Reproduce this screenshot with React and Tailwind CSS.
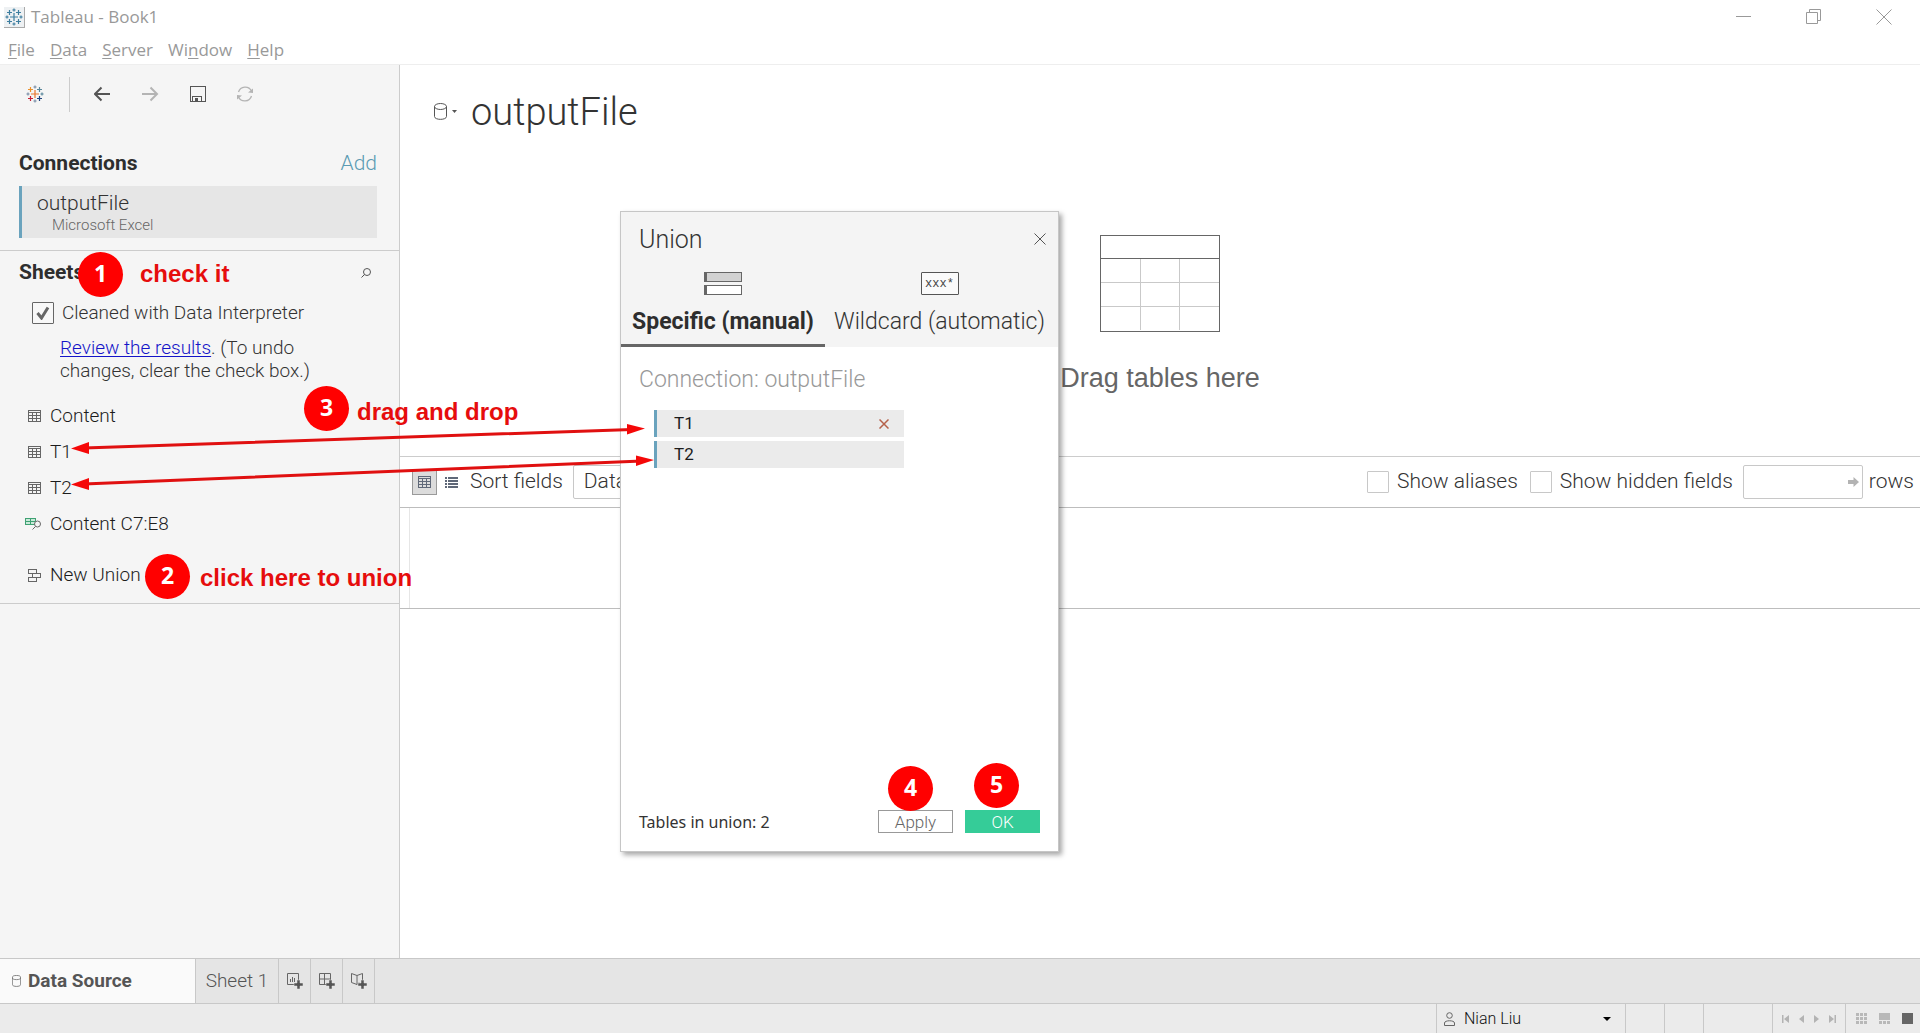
import React from "react";

const ui = "font-[Roboto,sans-serif] font-light";

function TableauMark({ size, colors }) {
  const marks = [
    [9, 9, 4, colors[0]],
    [4.5, 4.5, 2.5, colors[1]],
    [13.5, 4.5, 2.5, colors[2]],
    [4.5, 13.5, 2.5, colors[3]],
    [13.5, 13.5, 2.5, colors[4]],
    [9, 2, 1.6, colors[5]],
    [9, 16, 1.6, colors[5]],
    [2, 9, 1.6, colors[5]],
    [16, 9, 1.6, colors[2]],
  ];
  return (
    <svg width={size} height={size} viewBox="0 0 18 18" fill="none" strokeWidth="1.2" aria-hidden="true">
      {marks.map(([x, y, r, c]) => (
        <path key={`${x}-${y}`} stroke={c} d={`M${x - r} ${y}H${x + r}M${x} ${y - r}V${y + r}`} />
      ))}
    </svg>
  );
}

function TableIcon({ color = "#666" }) {
  return (
    <svg width="13" height="12" viewBox="0 0 13 12" fill="none" stroke={color} shapeRendering="crispEdges" aria-hidden="true">
      <rect x="0.5" y="0.5" width="12" height="11" />
      <path d="M0 2.5H13M0 5.5H13M0 8.5H13M4.5 2V12M8.5 2V12" />
    </svg>
  );
}

function Cylinder({ w, h }) {
  return (
    <svg width={w} height={h} viewBox="0 0 13 17" fill="none" stroke="#555" strokeWidth="1" aria-hidden="true">
      <ellipse cx="6.5" cy="3.5" rx="6" ry="3" />
      <path d="M0.5 3.5V13.5C0.5 17.3 12.5 17.3 12.5 13.5V3.5" />
    </svg>
  );
}

function Toolbar() {
  return (
    <div className="flex h-[58px] items-center pl-6">
      <button aria-label="Start page" className="flex w-[21px] justify-center">
        <TableauMark size={18} colors={["#e8762c", "#eb912b", "#59879b", "#c72035", "#1f447e", "#7b8fa8"]} />
      </button>
      <div className="ml-6 h-[35px] w-px bg-[#cccccc]" />
      <button aria-label="Back" className="ml-6">
        <svg width="17" height="16" viewBox="0 0 17 16" fill="none" stroke="#555" strokeWidth="2">
          <path d="M16 8H1M7.500 1.500L1 8L7.500 14.500" />
        </svg>
      </button>
      <button aria-label="Forward" className="ml-[31px]">
        <svg width="17" height="16" viewBox="0 0 17 16" fill="none" stroke="#b4b4b4" strokeWidth="2">
          <path d="M0 8H15M8.5 1.5L15 8L8.5 14.5" />
        </svg>
      </button>
      <button aria-label="Save" className="ml-[31px]">
        <svg width="16" height="16" viewBox="0 0 16 16" fill="none" stroke="#555" shapeRendering="crispEdges">
          <rect x="0.5" y="0.5" width="15" height="15" />
          <path d="M2.5 15.500V10.500H11.500V15.500" />
          <path d="M5 12H7V15H5Z" fill="#555" />
        </svg>
      </button>
      <button aria-label="Refresh" className="ml-[30px]">
        <svg width="18" height="16" viewBox="0 0 18 16" fill="none" stroke="#b4b4b4" strokeWidth="1.3">
          <path d="M2.500 6A7 7 0 0 1 15.500 5M15.500 10A7 7 0 0 1 2.500 11" />
          <path d="M12 6.500L17 7L17 2.500ZM6 9.500L1 9L1 13.500Z" fill="#b4b4b4" stroke="none" />
        </svg>
      </button>
    </div>
  );
}

function SheetRow({ icon, label }) {
  return (
    <li>
      <button className="flex h-9 w-full items-center text-[19px] text-[#1c1c1c]">
        <span className="flex w-[50px] justify-end pr-[9px]">{icon}</span>
        {label}
      </button>
    </li>
  );
}

function Sidebar() {
  return (
    <aside className="flex w-[400px] shrink-0 flex-col border-r border-[#cccccc] bg-[#f5f5f5] text-[#333]">
      <Toolbar />
      <section className="mt-5 border-b border-[#cccccc] pr-[22px] pb-3 pl-[19px]">
        <div className="flex h-[43px] items-center justify-between pb-[2px]">
          <h2 className="text-[21px] font-bold text-[#2e2e2e]">Connections</h2>
          <button className="text-[21px] text-[#5b9bb3]">Add</button>
        </div>
        <button className="flex h-[52px] w-full flex-col justify-center border-l-[3px] border-[#6aa3bd] bg-[#e6e6e6] pt-[2px] pl-[15px] text-left">
          <span className="text-[21px] leading-6">outputFile</span>
          <span className="pl-[15px] text-[15px] leading-5 text-[#666]">Microsoft Excel</span>
        </button>
      </section>
      <section className="border-b border-[#cccccc] pb-[10px]">
        <div className="flex h-11 items-center justify-between pr-7 pl-[19px]">
          <h2 className="text-[21px] font-bold text-[#2e2e2e]">Sheets</h2>
          <button aria-label="Search sheets">
            <svg width="10" height="10" viewBox="0 0 10 10" fill="none" stroke="#555">
              <circle cx="6" cy="4" r="3.500" />
              <path d="M3.500 6.500L0.500 9.500" />
            </svg>
          </button>
        </div>
        <label className="flex h-9 items-center gap-2 pl-8 text-[19px]">
          <span className="relative flex size-[22px]">
            <input type="checkbox" defaultChecked className="size-[22px] appearance-none rounded-[1px] border border-[#666] bg-[#f8f8f8]" />
            <svg className="pointer-events-none absolute top-1 left-1" width="14" height="14" viewBox="0 0 14 14" fill="none" stroke="#666" strokeWidth="3">
              <path d="M1.500 7L5.500 12L12 1.500" />
            </svg>
          </span>
          Cleaned with Data Interpreter
        </label>
        <p className="pt-[5px] pl-[60px] text-[19px] leading-[23px]">
          <a href="#results" className="text-[#1414c8] underline decoration-1 underline-offset-2">Review the results</a>. (To undo
          <br />
          changes, clear the check box.)
        </p>
        <ul className="mt-4">
          <SheetRow icon={<TableIcon />} label="Content" />
          <SheetRow icon={<TableIcon />} label="T1" />
          <SheetRow icon={<TableIcon />} label="T2" />
          <SheetRow
            label="Content C7:E8"
            icon={
              <svg width="16" height="12" viewBox="0 0 16 12" fill="none">
                <rect x="0.5" y="0.5" width="10" height="6" fill="#c9ead9" stroke="#3fa173" />
                <path d="M0 3.500H10M5.500 0V6.500" stroke="#3fa173" />
                <circle cx="12.500" cy="6" r="3" fill="#f5f5f5" stroke="#666" />
                <path d="M10.500 8.500L7.500 11.500" stroke="#666" />
              </svg>
            }
          />
        </ul>
        <button className="mt-[15px] flex h-9 items-center text-[19px] text-[#1c1c1c]">
          <span className="flex w-[50px] justify-end pr-[9px]">
            <svg width="13" height="13" viewBox="0 0 13 13" fill="none" stroke="#666" shapeRendering="crispEdges">
              <rect x="0.500" y="0.500" width="8" height="4" />
              <rect x="4.500" y="4.500" width="8" height="4" />
              <rect x="0.500" y="8.500" width="8" height="4" />
            </svg>
          </span>
          New Union
        </button>
      </section>
    </aside>
  );
}

function GridToolbar() {
  return (
    <div className="flex h-[51px] items-center justify-between border-b border-[#bdbdbd] pr-[6px] pl-3 text-[21px]">
      <div className="flex items-center">
        <button aria-label="Grid view" className="flex size-[25px] items-center justify-center border border-[#9a9a9a] bg-[#dcdcdc]">
          <TableIcon color="#5f6878" />
        </button>
        <button aria-label="List view" className="ml-2">
          <svg width="13" height="11" viewBox="0 0 13 11" fill="#5f6878" shapeRendering="crispEdges">
            <path d="M0 0H2V2H0ZM3 0H13V2H3ZM0 3H2V5H0ZM3 3H13V5H3ZM0 6H2V8H0ZM3 6H13V8H3ZM0 9H2V11H0ZM3 9H13V11H3Z" />
          </svg>
        </button>
        <label htmlFor="sort" className="ml-3">Sort fields</label>
        <select id="sort" className="ml-[10px] h-[34px] w-[220px] appearance-none rounded-[2px] border border-[#c8c8c8] bg-white pl-[10px]">
          <option>Data source order</option>
        </select>
      </div>
      <div className="flex items-center">
        <label className="flex items-center gap-2">
          <input type="checkbox" className="size-[22px] appearance-none rounded-[1px] border border-[#c8c8c8]" />
          Show aliases
        </label>
        <label className="ml-3 flex items-center gap-2">
          <input type="checkbox" className="size-[22px] appearance-none rounded-[1px] border border-[#c8c8c8]" />
          Show hidden fields
        </label>
        <label className="ml-[10px] flex items-center gap-[6px]">
          <span className="relative flex">
            <input type="text" className="h-[34px] w-[120px] rounded-[2px] border border-[#c8c8c8]" />
            <svg className="absolute top-3 right-1" width="11" height="10" viewBox="0 0 11 10" fill="#b3b3b3">
              <path d="M0 3H5.500V0L11 5L5.500 10V7H0Z" />
            </svg>
          </span>
          rows
        </label>
      </div>
    </div>
  );
}

function Canvas() {
  return (
    <main className="flex min-w-0 flex-1 flex-col bg-white text-[#333]">
      <div className="flex h-[392px] shrink-0 flex-col border-b border-[#cccccc]">
        <header className="flex h-[92px] items-center pl-[34px]">
          <button aria-label="Data source options" className="flex items-center gap-[5px]">
            <Cylinder w={13} h={17} />
            <svg width="5" height="3" viewBox="0 0 5 3" fill="#555"><path d="M0 0H5L2.500 3Z" /></svg>
          </button>
          <h1 className="ml-[14px] pt-[2px] text-[38px] leading-10">outputFile</h1>
        </header>
        <div className="flex flex-col items-center pt-[78px] font-normal">
          <svg width="120" height="97" viewBox="0 0 120 97" fill="none" stroke="#c9c9c9" shapeRendering="crispEdges">
            <path d="M40 24V95M79 24V95M1 47.500H119M1 71.500H119" />
            <path d="M0.500 0.500H119.500V96.500H0.500Z" stroke="#666" />
            <path d="M1 23.500H119" stroke="#666" />
          </svg>
          <p className="mt-7 font-['Liberation_Sans',sans-serif] text-[27px] leading-9 text-[#666]">Drag tables here</p>
        </div>
      </div>
      <GridToolbar />
      <div className="flex h-[101px] border-b border-[#bdbdbd]">
        <div className="w-[10px] border-r border-[#e6e6e6]" />
      </div>
    </main>
  );
}

function Badge({ n, className }) {
  return (
    <span className={`absolute flex size-[45px] items-center justify-center rounded-full bg-[#ff0000] pb-[2px] font-['Open_Sans',sans-serif] text-[23px] font-bold text-white ${className}`}>
      {n}
    </span>
  );
}

function UnionDialog() {
  return (
    <div role="dialog" aria-labelledby="union-title" className="absolute top-[211px] left-[620px] flex h-[641px] w-[439px] flex-col border border-[#c6c6c6] bg-white text-[#333] shadow-[3px_3px_5px_rgba(0,0,0,0.35)]">
      <div className="bg-[#f4f4f4]">
        <div className="flex h-[54px] items-center justify-between pr-3 pl-[18px]">
          <h2 id="union-title" className="pt-[2px] text-[25px]">Union</h2>
          <button aria-label="Close">
            <svg width="12" height="12" viewBox="0 0 12 12" stroke="#555"><path d="M0.500 0.500L11.500 11.500M11.500 0.500L0.500 11.500" /></svg>
          </button>
        </div>
        <div className="flex h-[81px] text-[23px]" role="tablist">
          <button role="tab" aria-selected="true" className="flex w-[204px] flex-col items-center border-b-[3px] border-[#666] pt-[6px] font-bold text-[#2e2e2e]">
            <svg width="38" height="23" viewBox="0 0 38 23" fill="none" stroke="#666" shapeRendering="crispEdges">
              <rect x="0.500" y="0.500" width="37" height="9" fill="#d2d2d2" />
              <rect x="0.500" y="13.500" width="37" height="9" fill="#fff" />
              <path d="M0 0H3V10H0ZM0 13H3V23H0Z" fill="#666" stroke="none" />
            </svg>
            <span className="mt-[11px] leading-8">Specific (manual)</span>
          </button>
          <button role="tab" aria-selected="false" className="flex flex-1 flex-col items-center pt-[6px] pr-1 whitespace-nowrap">
            <span className="flex h-[23px] w-[38px] items-center justify-center rounded-[1px] border border-[#555] bg-[#fafafa] font-['Liberation_Mono',monospace] text-[12px] leading-none font-normal text-[#444]">xxx*</span>
            <span className="mt-[11px] leading-8">Wildcard (automatic)</span>
          </button>
        </div>
      </div>
      <p className="mt-[17px] pl-[18px] text-[23px] leading-8 text-[#999]">Connection: outputFile</p>
      <ul className="mt-[14px] ml-[33px] flex w-[250px] flex-col gap-1 text-[17px] leading-none font-normal text-[#1c1c1c]">
        <li className="flex h-[27px] items-center justify-between border-l-[3px] border-[#6aa3bd] bg-[#ebebeb] pr-[15px] pl-[17px]">
          T1
          <button aria-label="Remove T1">
            <svg width="10" height="10" viewBox="0 0 10 10" stroke="#b5614a" strokeWidth="1.500"><path d="M0.500 0.500L9.500 9.500M9.500 0.500L0.500 9.500" /></svg>
          </button>
        </li>
        <li className="flex h-[27px] items-center border-l-[3px] border-[#6aa3bd] bg-[#ebebeb] pl-[17px]">T2</li>
      </ul>
      <div className="mt-auto mb-[18px] flex items-center pr-[18px] pl-[18px]">
        <span className="flex-1 font-['Noto_Sans',sans-serif] text-[16px] leading-5 font-normal">Tables in union: 2</span>
        <button className="h-[23px] w-[75px] border border-[#999] bg-white text-[17px] leading-5 text-[#666]">Apply</button>
        <button className="ml-3 h-[23px] w-[75px] bg-[#35cc98] text-[17px] leading-5 text-white">OK</button>
      </div>
      <Badge n="4" className="top-[554px] left-[267px]" />
      <Badge n="5" className="top-[551px] left-[353px]" />
    </div>
  );
}

function Callout({ children, className }) {
  return (
    <span className={`absolute font-['Liberation_Sans',sans-serif] text-[24px] leading-7 font-bold whitespace-nowrap text-[#e60d0d] ${className}`}>
      {children}
    </span>
  );
}

function Annotations() {
  return (
    <div className="pointer-events-none absolute inset-0">
      <svg className="absolute inset-0" width="100%" height="100%" fill="#f50808" stroke="#e01010" strokeWidth="3">
        <path d="M84 448L632 429.500M84 484L642 461" />
        <path stroke="none" d="M71 448.500L89 442V454ZM645 428.500L627 424V434.500ZM71 484.500L89 478V490ZM654 460L636 455.500V466Z" />
      </svg>
      <Badge n="1" className="top-[252px] left-[78px]" />
      <Callout className="top-[260px] left-[140px]">check it</Callout>
      <Badge n="3" className="top-[386px] left-[304px]" />
      <Callout className="top-[398px] left-[357px]">drag and drop</Callout>
      <Badge n="2" className="top-[554px] left-[145px]" />
      <Callout className="top-[564px] left-[200px]">click here to union</Callout>
    </div>
  );
}

function PlusMark() {
  return <path d="M10 7H13V10H16V13H13V16H10V13H7V10H10Z" fill="#555" stroke="#e5e5e5" strokeWidth="0.500" />;
}

function SheetTabs() {
  const cell = "flex w-8 items-center justify-center border-r border-[#c8c8c8]";
  return (
    <nav className="flex h-[46px] shrink-0 border-y border-[#c8c8c8] bg-[#e5e5e5] text-[#555]">
      <button className="flex w-[196px] items-center gap-[7px] border-r border-[#c8c8c8] bg-[#fafafa] pl-3 text-[19px] font-bold">
        <Cylinder w={9} h={12} />
        Data Source
      </button>
      <button className="w-[83px] border-r border-[#c8c8c8] text-[19px]">Sheet 1</button>
      <button aria-label="New worksheet" className={cell}>
        <svg width="16" height="16" viewBox="0 0 16 16" fill="none" stroke="#666">
          <path d="M8 11.500H0.500V0.500H11.500V8M3.500 6V9M5.500 4V9M7.500 5V9" />
          <PlusMark />
        </svg>
      </button>
      <button aria-label="New dashboard" className={cell}>
        <svg width="16" height="16" viewBox="0 0 16 16" fill="none" stroke="#666">
          <path d="M8 11.500H0.500V0.500H11.500V8M5.500 0.500V11.500M0.500 6H11.500" />
          <PlusMark />
        </svg>
      </button>
      <button aria-label="New story" className={cell}>
        <svg width="16" height="16" viewBox="0 0 16 16" fill="none" stroke="#666">
          <path d="M8 9.500L6 11.500L0.500 9.500V0.500L6 2.500L11.500 0.500V8M6 2.500V11.500" />
          <PlusMark />
        </svg>
      </button>
    </nav>
  );
}

function StatusBar() {
  const nav = [
    ["First", "M0 0H1.500V8H0ZM7 0V8L2 4Z"],
    ["Previous", "M6 0V8L1 4Z"],
    ["Next", "M1 0V8L6 4Z"],
    ["Last", "M0 0V8L5 4ZM5.500 0H7V8H5.500Z"],
  ];
  return (
    <footer className="flex h-[29px] shrink-0 justify-end bg-[#ebebeb]">
      <button className="flex w-[190px] items-center border-x border-[#c8c8c8] pr-[14px] pl-[7px] text-[16px] text-[#111]">
        <svg width="11" height="14" viewBox="0 0 11 14" fill="none" stroke="#666">
          <circle cx="5.500" cy="3.500" r="2.800" />
          <path d="M0.500 13.500V11C0.500 8 10.500 8 10.500 11V13.500Z" />
        </svg>
        <span className="ml-[9px] flex-1 text-left">Nian Liu</span>
        <svg width="8" height="4" viewBox="0 0 8 4"><path d="M0 0H8L4 4Z" /></svg>
      </button>
      <div className="w-[39px] border-r border-[#c8c8c8]" />
      <div className="w-[39px] border-r border-[#c8c8c8]" />
      <div className="w-[69px] border-r border-[#c8c8c8]" />
      <div className="flex w-[73px] items-center justify-between border-r border-[#c8c8c8] px-[9px]">
        {nav.map(([name, d]) => (
          <button key={name} aria-label={name}>
            <svg width="7" height="8" viewBox="0 0 7 8" fill="#b3b3b3"><path d={d} /></svg>
          </button>
        ))}
      </div>
      <div className="flex w-[74px] items-center justify-between pr-[7px] pl-[10px]">
        <button aria-label="Show sheet sorter">
          <svg width="11" height="11" viewBox="0 0 11 11" fill="#b8b8b8" shapeRendering="crispEdges">
            <path d="M0 0H3V3H0ZM4 0H7V3H4ZM8 0H11V3H8ZM0 4H3V7H0ZM4 4H7V7H4ZM8 4H11V7H8ZM0 8H3V11H0ZM4 8H7V11H4ZM8 8H11V11H8Z" />
          </svg>
        </button>
        <button aria-label="Show filmstrip">
          <svg width="11" height="11" viewBox="0 0 11 11" fill="#b8b8b8" shapeRendering="crispEdges">
            <path d="M0 0H11V7H0ZM0 8H3V11H0ZM4 8H7V11H4ZM8 8H11V11H8Z" />
          </svg>
        </button>
        <button aria-label="Show tabs" className="size-[11px] bg-[#666]" />
      </div>
    </footer>
  );
}

export default function App() {
  return (
    <div className={`relative flex min-h-screen flex-col overflow-hidden bg-white ${ui}`}>
      <header className="flex h-[34px] items-center justify-between pl-1 font-['Open_Sans',sans-serif] text-[17px] font-normal text-[#999]">
        <div className="flex items-center gap-[6px]">
          <span className="flex size-[21px] items-center justify-center border-r border-b border-[#aaa] bg-[#eef1f3]">
            <TableauMark size={18} colors={["#3d7ea0", "#3d7ea0", "#3d7ea0", "#3d7ea0", "#3d7ea0", "#3d7ea0"]} />
          </span>
          Tableau - Book1
        </div>
        <div className="flex items-center gap-[54px] pr-[28px]">
          <button aria-label="Minimize">
            <svg width="16" height="16" viewBox="0 0 16 16" stroke="#999"><path d="M0 7.500H15" /></svg>
          </button>
          <button aria-label="Restore">
            <svg width="16" height="16" viewBox="0 0 16 16" fill="none" stroke="#999">
              <path d="M0.500 3.500H11.500V14.500H0.500ZM3.500 3.500V0.500H14.500V11.500H11.500" />
            </svg>
          </button>
          <button aria-label="Close window">
            <svg width="16" height="16" viewBox="0 0 16 16" stroke="#999"><path d="M0.500 0.500L15.500 15.500M15.500 0.500L0.500 15.500" /></svg>
          </button>
        </div>
      </header>
      <nav className="flex h-[31px] items-center gap-[15px] border-b border-[#eeeeee] pt-[2px] pl-2 font-['Open_Sans',sans-serif] text-[17px] font-normal text-[#999]">
        <button><u className="underline-offset-2">F</u>ile</button>
        <button><u className="underline-offset-2">D</u>ata</button>
        <button><u className="underline-offset-2">S</u>erver</button>
        <button>Wi<u className="underline-offset-2">n</u>dow</button>
        <button><u className="underline-offset-2">H</u>elp</button>
      </nav>
      <div className="flex flex-1">
        <Sidebar />
        <Canvas />
      </div>
      <SheetTabs />
      <StatusBar />
      <UnionDialog />
      <Annotations />
    </div>
  );
}
